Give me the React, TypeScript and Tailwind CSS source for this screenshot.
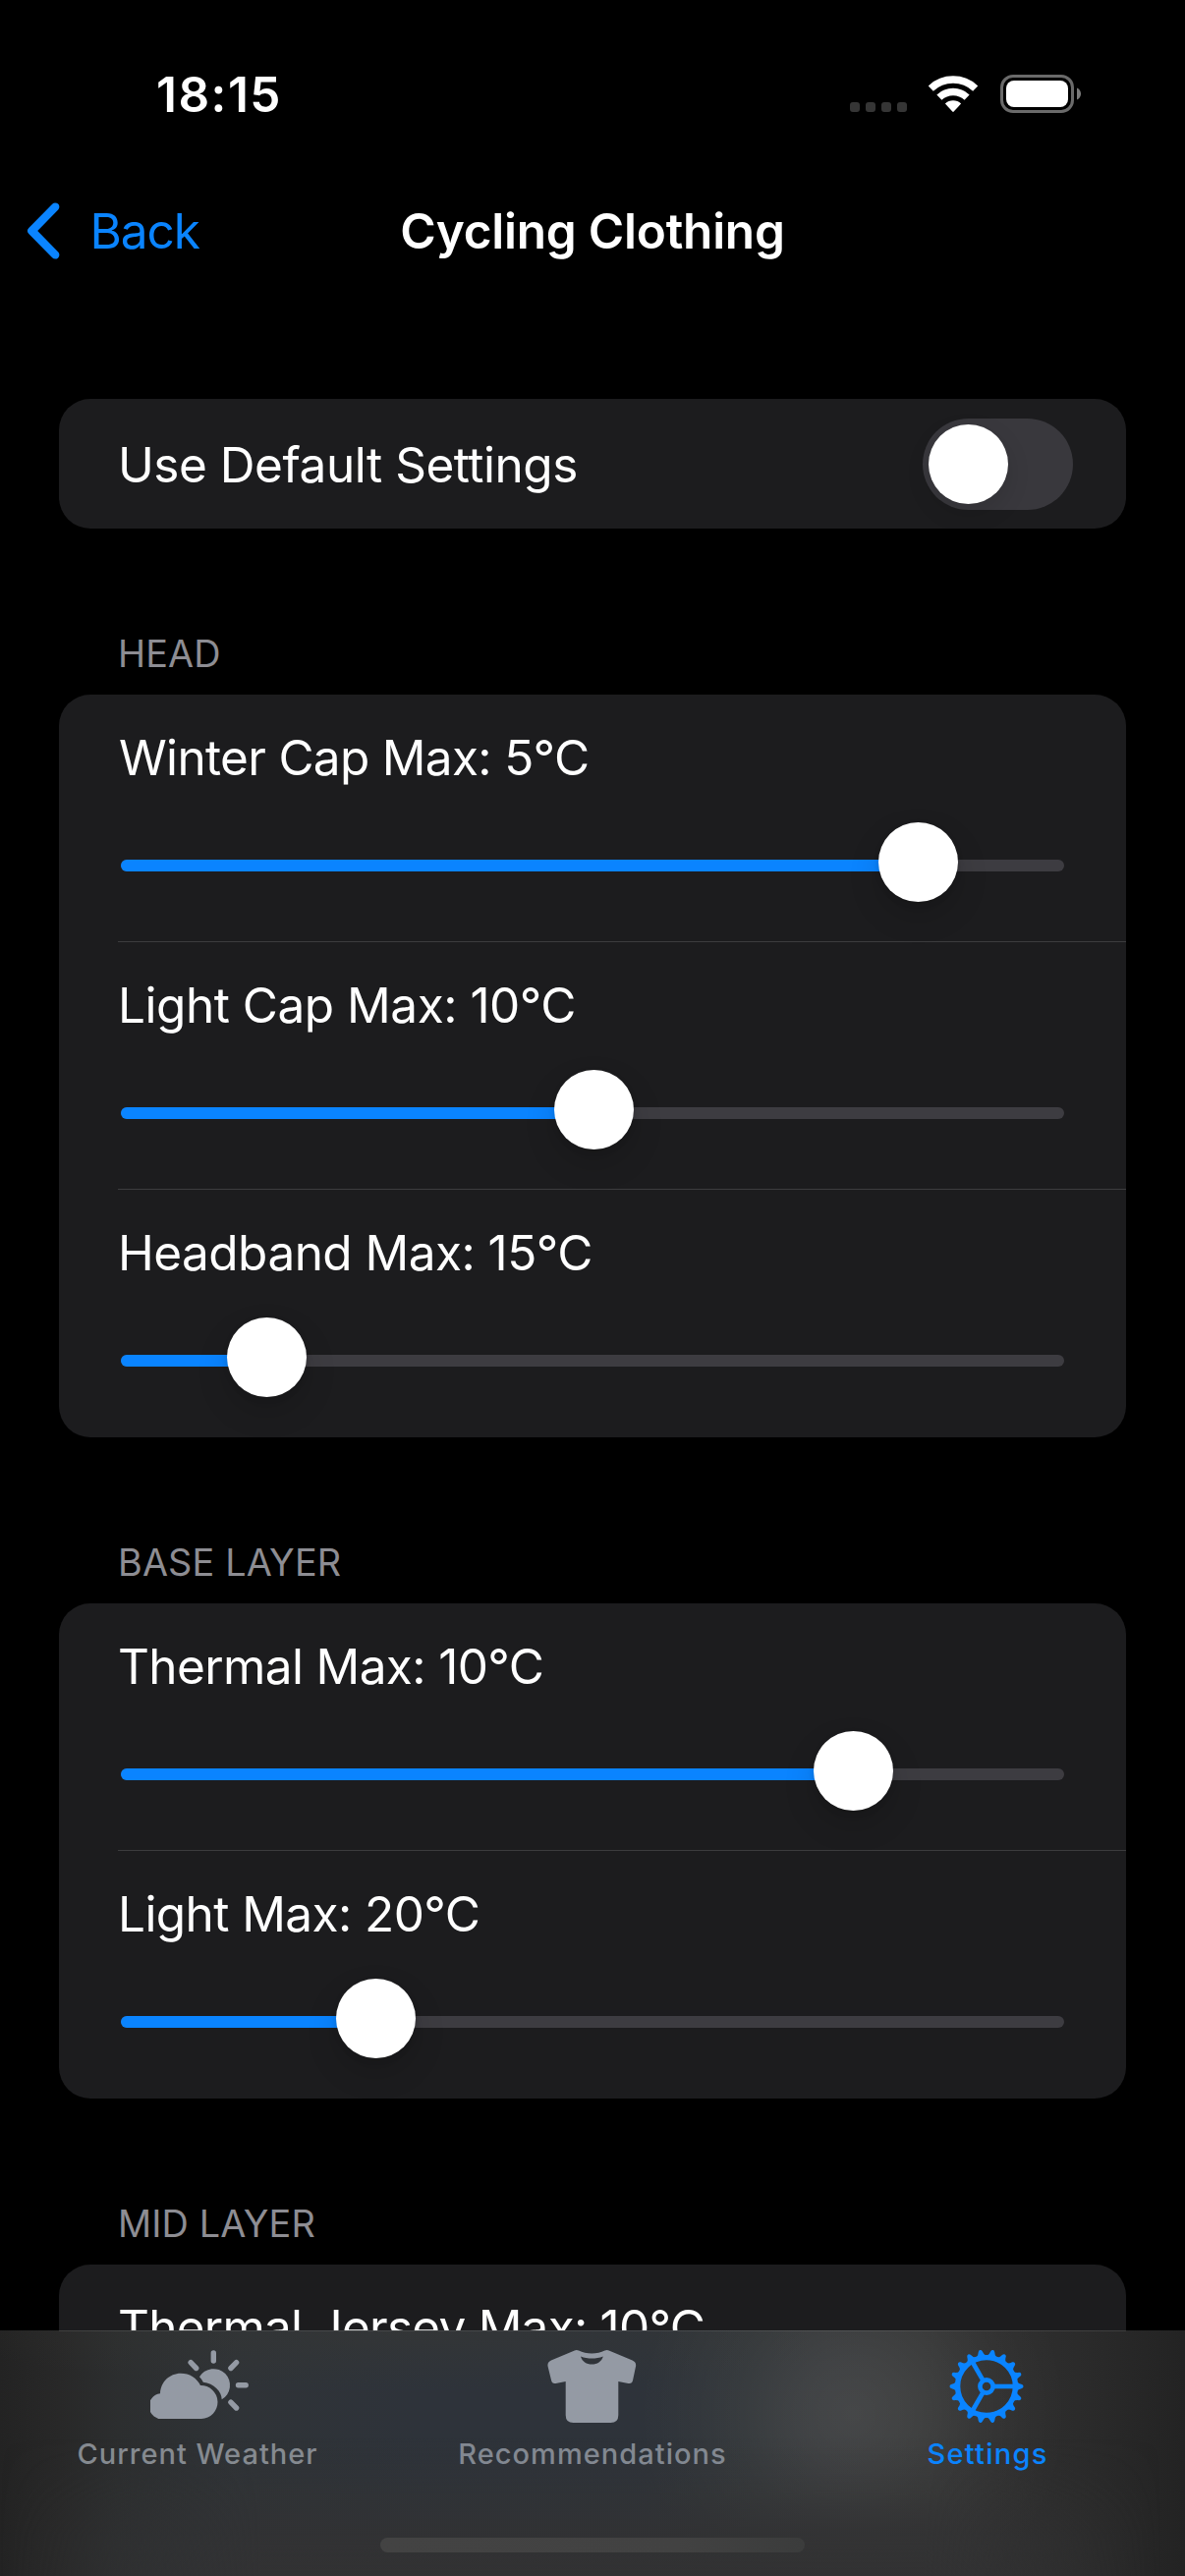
import React from "react";

type SliderRow = { label: string; knob: number; tracking: string };
type Section = { title: string; rows: SliderRow[] };

// `knob` is the distance in pixels from the start of the track to the knob's left edge.
const sections: Section[] = [
  {
    title: "HEAD",
    rows: [
      { label: "Winter Cap Max: 5°C", knob: 771, tracking: "pl-px tracking-[-0.68px]" },
      { label: "Light Cap Max: 10°C", knob: 441, tracking: "tracking-[-0.48px]" },
      { label: "Headband Max: 15°C", knob: 108, tracking: "tracking-[-0.53px]" },
    ],
  },
  {
    title: "BASE LAYER",
    rows: [
      { label: "Thermal Max: 10°C", knob: 705, tracking: "tracking-[-0.62px]" },
      { label: "Light Max: 20°C", knob: 219, tracking: "tracking-[-0.58px]" },
    ],
  },
  {
    title: "MID LAYER",
    rows: [{ label: "Thermal Jersey Max: 10°C", knob: 400, tracking: "tracking-[-0.76px]" }],
  },
];

function WifiIcon() {
  return (
    <svg width="50" height="37" viewBox="0 0 50 37" fill="none">
      <path d="M2.3 13.1A33 33 0 0 1 47.7 13.1" stroke="white" strokeWidth="7.4" />
      <path d="M10.9 22.1A20.5 20.5 0 0 1 39.1 22.1" stroke="white" strokeWidth="7.4" />
      <path d="M16.9 28.5A11.7 11.7 0 0 1 33.1 28.5L25.7 36.6Q25 37.3 24.3 36.6Z" fill="white" />
    </svg>
  );
}

function BatteryIcon() {
  return (
    <svg width="83" height="39" viewBox="0 0 83 39" fill="none">
      <rect x="1.5" y="1.5" width="72" height="36" rx="11.5" stroke="#6a6a6a" strokeWidth="3" />
      <rect x="6" y="6" width="63" height="27" rx="8" fill="white" />
      <path d="M78 13.5C83.4 15.6 83.4 23.4 78 25.5Z" fill="#7b7b7b" />
    </svg>
  );
}

function StatusBar() {
  return (
    <div className="flex h-[126px] items-end justify-between pl-[159px] pr-[105px]">
      <span className="text-[49.5px] font-semibold leading-[60px] tracking-[1.5px]">18:15</span>
      <div className="flex h-[60px] items-start pt-[10px]">
        <div className="mt-7 flex gap-1.5">
          {[0, 1, 2, 3].map((i) => (
            <span key={i} className="size-[10px] rounded-[3px] bg-[#353535]" />
          ))}
        </div>
        <div className="ml-[22px] mt-px">
          <WifiIcon />
        </div>
        <div className="ml-[23px]">
          <BatteryIcon />
        </div>
      </div>
    </div>
  );
}

function NavBar() {
  return (
    <div className="mt-[79px] grid h-[60px] grid-cols-[1fr_auto_1fr] items-center">
      <div className="flex items-center pl-[27px] text-[#0a84ff]">
        <svg width="34" height="58" viewBox="0 0 34 58" fill="none">
          <path
            d="M29.2 4.6L5.3 29L29.2 53.4"
            stroke="currentColor"
            strokeWidth="8.4"
            strokeLinecap="round"
            strokeLinejoin="round"
          />
        </svg>
        <span className="ml-[30.5px] text-[49.5px] leading-[60px] tracking-[-1.05px]">Back</span>
      </div>
      <h1 className="text-[49.5px] font-semibold leading-[60px] tracking-[-0.23px]">Cycling Clothing</h1>
      <div />
    </div>
  );
}

function Slider({ knob }: { knob: number }) {
  return (
    <div className="relative ml-[3px] mt-9 h-[81px] w-[960px] pt-[38px]">
      <div className="h-3 overflow-hidden rounded-full bg-[#3d3c41]">
        <div className="h-full bg-[#0a84ff]" style={{ width: knob + 40 }} />
      </div>
      <div
        className="absolute top-0 size-[81px] rounded-full bg-white shadow-[0_2px_6px_rgba(0,0,0,0.1),0_14px_32px_rgba(0,0,0,0.15)]"
        style={{ left: knob }}
      />
    </div>
  );
}

function SliderCell({ row, last }: { row: SliderRow; last: boolean }) {
  return (
    <div className={`ml-[60px] h-[252px] pt-[34px] ${last ? "" : "border-b border-[#3c3c3e]"}`}>
      <div className={`text-[49.5px] leading-[60px] ${row.tracking}`}>{row.label}</div>
      <Slider knob={row.knob} />
    </div>
  );
}

function Cloud() {
  return (
    <svg className="ml-1 mt-[19px]" width="100" height="71" viewBox="0 0 100 71" fill="#949aa4">
      <path d="M13.3 70A13 13 0 0 1 10 44.2C10.5 32.5 19.5 23.7 31 23.7C39.8 23.7 47.3 28.3 51 36A17 17 0 0 1 52 70Z" />
      <path d="M50 27.3A16.7 16.7 0 1 1 72.7 50.3C72.5 46 71 42.5 67.5 39.2C64 35.5 59 33.3 53.8 32.7C52.8 30.7 51.5 28.8 50 27.3Z" />
      <path
        d="M64.3 3V11M81.9 18.5L87.6 12.7M41.1 12.7L46.7 18.5M89.5 35.7H97.2M81.9 53.2L87.6 59"
        stroke="#949aa4"
        strokeWidth="5.4"
        strokeLinecap="round"
      />
    </svg>
  );
}

function Shirt() {
  return (
    <svg className="mr-[2px] mt-[18px]" width="91" height="76" viewBox="0 0 91 76" fill="#949aa4" fillRule="evenodd">
      <path d="M27.8 1.4Q29.9 0.4 32 1.6C39.5 5.5 51 5.5 58.5 1.6Q60.6 0.4 62.7 1.4L86.6 11.6Q90.9 13.5 90 17.8L87 32Q86.2 35.6 82.4 34.9L72.3 33V67.2Q72.3 75 64.5 75H26.5Q18.7 75 18.7 67.2V33L8.6 34.9Q4.9 35.6 4.1 32L0.6 17.8Q-0.3 13.5 3.9 11.6ZM34 7.5C35.3 12.6 40 15.6 45.4 15.6S55.4 12.6 56.8 7.5C49.5 10.2 41.2 10.2 34 7.5Z" />
    </svg>
  );
}

function Gear() {
  return (
    <svg className="mr-[1.4px] mt-[18px]" width="76" height="76" viewBox="-38 -38 76 76" fill="none">
      <circle r="29.4" stroke="#0a84ff" strokeWidth="5.4" />
      <circle r="6.6" stroke="#0a84ff" strokeWidth="4.6" />
      {[0, 120, 240].map((angle) => (
        <path key={angle} d="M8 0H28" stroke="#0a84ff" strokeWidth="4.6" transform={`rotate(${angle})`} />
      ))}
      {Array.from({ length: 18 }, (_, i) => (
        <path
          key={i}
          d="M30.5 -5.2Q32.4 -2.8 36 -2Q37.5 -1.4 37.5 0T36 2Q32.4 2.8 30.5 5.2Z"
          fill="#0a84ff"
          transform={`rotate(${i * 20})`}
        />
      ))}
    </svg>
  );
}

function Tab({ icon, label, className }: { icon: React.ReactNode; label: string; className: string }) {
  return (
    <div className="flex flex-col items-center">
      <div className="flex h-[106.5px] items-start">{icon}</div>
      <span className={`text-[29px] font-medium leading-9 ${className}`}>{label}</span>
    </div>
  );
}

function TabBar() {
  return (
    <div className="absolute inset-x-0 bottom-0 h-[250px] overflow-hidden bg-[linear-gradient(90deg,#232323_0%,#282828_5%,#2c2e2f_10%,#2f3337_20%,#2e333a_35%,#2e333a_54%,#303437_63%,#333537_70%,#333434_78%,#2f2f2f_84%,#2b2b2b_91%,#232323_100%)]">
      <div className="absolute inset-x-0 top-0 h-[60px] bg-[radial-gradient(ellipse_480px_60px_at_420px_0px,rgba(56,56,52,0.5),transparent)]" />
      <div className="absolute inset-0 bg-[radial-gradient(ellipse_220px_220px_at_868px_85px,rgba(255,255,255,0.09)_0%,rgba(255,255,255,0.072)_25%,rgba(255,255,255,0.036)_55%,rgba(255,255,255,0.01)_82%,transparent_100%)]" />
      <div className="absolute inset-x-0 bottom-0 h-[140px] bg-[linear-gradient(0deg,#323233_0%,rgba(50,50,51,0.85)_30%,rgba(50,50,51,0.35)_65%,transparent_100%)] mask-[linear-gradient(90deg,transparent_0%,black_22%,black_78%,transparent_98%)]" />
      <div className="absolute inset-x-[60px] top-0 h-px bg-white/10" />
      <div className="relative grid grid-cols-3 pt-px">
        <Tab icon={<Cloud />} label="Current Weather" className="tracking-[0.99px] text-[#858a90]" />
        <Tab icon={<Shirt />} label="Recommendations" className="tracking-[1.05px] text-[#828891]" />
        <Tab icon={<Gear />} label="Settings" className="tracking-[1.25px] text-[#0a84ff]" />
      </div>
      <div className="absolute bottom-6 left-1/2 h-[15px] w-[432px] -translate-x-1/2 rounded-full bg-[linear-gradient(90deg,#434343,#424242_70%,#3b3c3c)]" />
    </div>
  );
}

export default function App() {
  return (
    <div className="relative h-[2622px] w-[1206px] overflow-hidden bg-black font-[Inter,sans-serif] text-white">
      <StatusBar />
      <NavBar />
      <main className="px-[60px] pt-[141px]">
        <div className="flex h-[132px] items-center justify-between rounded-[32px] bg-[#1c1c1e] pl-[60px] pr-[54px]">
          <span className="pt-0.5 text-[49.5px] leading-[60px] tracking-[-0.47px]">Use Default Settings</span>
          <div className="h-[93px] w-[153px] rounded-full bg-[#39383d] p-1.5">
            <div className="size-[81px] rounded-full bg-white shadow-[0_9px_24px_rgba(0,0,0,0.12)]" />
          </div>
        </div>
        {sections.map((section) => (
          <section key={section.title}>
            <h2 className="pb-[19px] pl-[60px] pt-[104px] text-[37.8px] leading-[46px] tracking-[0.15px] text-[#8d8d93]">
              {section.title}
            </h2>
            <div className="rounded-[32px] bg-[#1c1c1e]">
              {section.rows.map((row, i) => (
                <SliderCell key={row.label} row={row} last={i === section.rows.length - 1} />
              ))}
            </div>
          </section>
        ))}
      </main>
      <TabBar />
    </div>
  );
}
